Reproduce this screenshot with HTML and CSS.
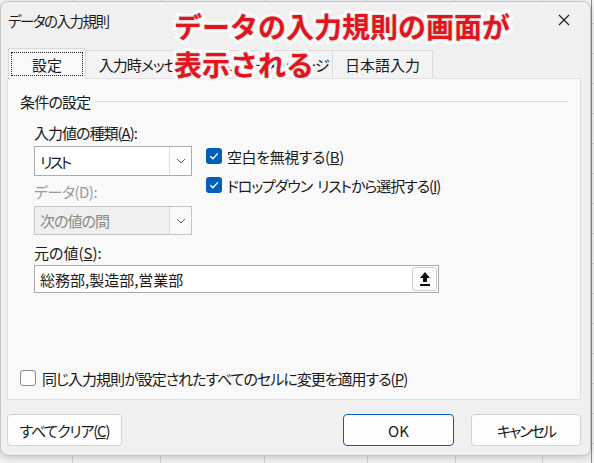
FILE: index.html
```html
<!DOCTYPE html>
<html lang="ja">

<head>
    <meta charset="UTF-8">
    <title>データの入力規則</title>
    <link rel="stylesheet" href="styles.css">
</head>

<body>
    <div class="dialog">
        <div class="titlebar">
            <span class="title">データの入力規則</span>
            <span class="close">
                <svg width="12" height="12" viewBox="0 0 12 12"><path d="M1 1 L11 11 M11 1 L1 11" stroke="#1a1a1a" stroke-width="1.1" fill="none"/></svg>
            </span>
        </div>

        <div class="tabs">
            <div class="tab tab-active"><span class="focus">設定</span></div>
            <div class="tab tab-msg">入力時メッセージ</div>
            <div class="tab tab-err"><span class="gap">エラー</span>メッセージ</div>
            <div class="tab tab-ime">日本語入力</div>
        </div>

        <div class="page">
            <div class="group-head">
                <span class="group-title">条件の設定</span>
                <i class="rule"></i>
            </div>

            <div class="group-body">
                <div class="criteria">
                    <div class="fields">
                        <div class="field-label type-label">入力値の種類(<u>A</u>):</div>
                        <div class="combo">
                            <span class="combo-value list-value">リスト</span>
                            <span class="combo-btn">
                                <svg width="10" height="6" viewBox="0 0 10 6"><path d="M1 1 L5 5 L9 1" stroke="#606060" stroke-width="1" fill="none"/></svg>
                            </span>
                        </div>
                        <div class="field-label disabled">データ(D):</div>
                        <div class="combo combo-disabled">
                            <span class="combo-value">次の値の間</span>
                            <span class="combo-btn">
                                <svg width="10" height="6" viewBox="0 0 10 6"><path d="M1 1 L5 5 L9 1" stroke="#606060" stroke-width="1" fill="none"/></svg>
                            </span>
                        </div>
                    </div>

                    <div class="options">
                        <div class="check check-blank">
                            <span class="box box-on">
                                <svg width="16" height="16" viewBox="0 0 16 16"><path d="M4.2 8.3 L6.9 10.8 L11.8 5.4" stroke="#fff" stroke-width="1.4" fill="none"/></svg>
                            </span>
                            空白を無視する(<u>B</u>)
                        </div>
                        <div class="check check-dropdown">
                            <span class="box box-on">
                                <svg width="16" height="16" viewBox="0 0 16 16"><path d="M4.2 8.3 L6.9 10.8 L11.8 5.4" stroke="#fff" stroke-width="1.4" fill="none"/></svg>
                            </span>
                            <span class="gap">ドロップダウン</span>リストから選択する(<u>I</u>)
                        </div>
                    </div>
                </div>

                <div class="field-label source-label">元の値(<u>S</u>):</div>
                <div class="source">
                    <span class="source-value">総務部,製造部,営業部</span>
                    <span class="pick-btn">
                        <svg width="12" height="16" viewBox="0 0 12 16"><path d="M6 1 L11 7 H8 V11 H4 V7 H1 Z" fill="#111"/><rect x="1" y="13" width="10" height="2" fill="#111"/></svg>
                    </span>
                </div>
            </div>

            <div class="check check-apply">
                <span class="box"></span>
                同じ入力規則が設定されたすべてのセルに変更を適用する(<u>P</u>)
            </div>
        </div>

        <div class="actions">
            <button class="btn btn-clear">すべてクリア(<u>C</u>)</button>
            <button class="btn btn-ok">OK</button>
            <button class="btn btn-cancel">キャンセル</button>
        </div>

        <div class="callout">データの入力規則の画面が<br>表示される</div>
    </div>
</body>

</html>
```

FILE: styles.css
```css
html,
body {
    margin: 0;
    padding: 0;
}

body {
    height: 463px;
    overflow: hidden;
    font-family: "Noto Sans CJK JP", "Noto Sans", sans-serif;
    font-size: 15px;
    color: #1a1a1a;
    font-feature-settings: "palt";
    background-color: #f4f4f4;
    background-image:
        linear-gradient(90deg, transparent 591px, #8c8c8c 591px 592px, transparent 592px),
        linear-gradient(90deg, transparent 72px, #d4d4d4 72px 73px, transparent 73px 160px, #d4d4d4 160px 161px, transparent 161px 264px, #d4d4d4 264px 265px, transparent 265px 367px, #d4d4d4 367px 368px, transparent 368px 455px, #d4d4d4 455px 456px, transparent 456px 542px, #d4d4d4 542px 543px, transparent 543px),
        repeating-linear-gradient(180deg, transparent 0 29px, #d4d4d4 29px 30px);
    background-position: 0 0, 0 0, 0 -6px;
}


.dialog {
    position: relative;
    width: 591px;
    height: 455px;
    margin-top: 1px;
    box-sizing: border-box;
    display: flex;
    flex-direction: column;
    background: #f0f0f0;
    border: 1px solid #c6c6c6;
    border-radius: 8px;
    box-shadow: 0 2px 9px rgba(0, 0, 0, 0.2);
}


.titlebar {
    height: 36px;
    display: flex;
    align-items: center;
    padding-left: 7px;
}

.title {
    font-size: 14.5px;
    letter-spacing: -1.5px;
}

.close {
    margin-left: auto;
    width: 52px;
    display: flex;
    justify-content: center;
}

/* word break inside a label, where a space would collapse */
.gap {
    margin-right: 5px;
}


.tabs {
    display: flex;
    align-items: flex-end;
    height: 30px;
    margin: 10px 0 0 7px;
    position: relative;
    z-index: 1;
}

.tab {
    height: 28px;
    box-sizing: border-box;
    display: flex;
    align-items: center;
    justify-content: center;
    border: 1px solid #dadada;
    border-bottom: none;
    background: #f3f3f3;
    margin-left: -1px;
    white-space: nowrap;
    letter-spacing: -1px;
}

.tab-active {
    width: 78px;
    height: 31px;
    margin-left: 0;
    margin-bottom: -1px;
    padding: 3px 2px 3px 2px;
    background: #f9f9f9;
    align-items: stretch;
    letter-spacing: 0;
}

.focus {
    flex: 1;
    display: flex;
    align-items: center;
    justify-content: center;
    border: 1px dotted #222;
}

.tab-msg {
    width: 133px;
}

.tab-err {
    width: 116px;
}

.tab-ime {
    width: 101px;
    letter-spacing: 0;
}


.page {
    height: 322px;
    flex: 0 0 322px;
    box-sizing: border-box;
    margin: 0 9px 0 6px;
    padding: 0 12px 11px 12px;
    display: flex;
    flex-direction: column;
    background: #f9f9f9;
    border: 1px solid #e0e0e0;
}

.group-head {
    display: flex;
    align-items: center;
    height: 20px;
    margin-top: 12px;
}

.group-title {
    letter-spacing: -0.8px;
}

.rule {
    flex: 1;
    height: 1px;
    margin-left: 5px;
    background: #dadada;
}

.group-body {
    padding-left: 14px;
}

.criteria {
    display: flex;
    margin-top: 12px;
}

.fields {
    width: 158px;
}

.field-label {
    height: 20px;
    line-height: 20px;
    white-space: nowrap;
}

.type-label {
    letter-spacing: -1px;
}

.field-label.disabled {
    margin-top: 6px;
    color: #9a9a9a;
    letter-spacing: -0.5px;
}

.combo {
    display: flex;
    height: 30px;
    margin-top: 3px;
    box-sizing: border-box;
    border: 1px solid #ababab;
    background: #fff;
}

.combo-disabled {
    height: 29px;
    margin-top: 4px;
    background: #efefef;
    border-color: #c4c4c4;
    color: #8a8a8a;
    letter-spacing: -1px;
}

.combo-value {
    flex: 1;
    display: flex;
    align-items: center;
    padding-left: 5px;
}

.list-value {
    letter-spacing: -2.5px;
}

.combo-btn {
    width: 21px;
    display: flex;
    align-items: center;
    justify-content: center;
    border-left: 1px solid #dcdcdc;
    background: #fff;
}

.combo-disabled .combo-btn {
    background: #f9f9f9;
}


.options {
    margin-left: 14px;
    padding-top: 24px;
}

.check {
    display: flex;
    align-items: center;
    height: 18px;
    white-space: nowrap;
}

.options .check + .check {
    margin-top: 11px;
}

.check-blank {
    letter-spacing: -0.4px;
}

.check-dropdown {
    letter-spacing: -1.1px;
}

.box {
    width: 16px;
    height: 16px;
    flex: none;
    box-sizing: border-box;
    margin-right: 5px;
    border: 1px solid #8a8a8a;
    border-radius: 3px;
    background: #fdfdfd;
    display: flex;
}

.box-on {
    border: none;
    background: #005fb8;
}


.source-label {
    margin-top: 8px;
}

.source {
    display: flex;
    align-items: center;
    width: 405px;
    height: 28px;
    margin-top: 2px;
    box-sizing: border-box;
    border: 1px solid #ababab;
    background: #fff;
}

.source-value {
    flex: 1;
    padding-left: 5px;
}

.pick-btn {
    width: 25px;
    height: 24px;
    margin-right: 1px;
    box-sizing: border-box;
    display: flex;
    align-items: center;
    justify-content: center;
    border: 1px solid #cdcdcd;
    border-radius: 3px;
    background: #fdfdfd;
}


.check-apply {
    margin-top: auto;
    height: 20px;
    letter-spacing: -1px;
}

.check-apply .box {
    margin-right: 6px;
}


.actions {
    display: flex;
    height: 32px;
    margin: 14px 9px 0 6px;
}

.btn {
    height: 32px;
    box-sizing: border-box;
    padding: 0;
    font-family: inherit;
    font-size: 15px;
    font-feature-settings: "palt";
    color: #1a1a1a;
    background: #fdfdfd;
    border: 1px solid #d2d2d2;
    border-radius: 4px;
}

.btn-clear {
    width: 115px;
    letter-spacing: -1.2px;
}

.btn-ok {
    width: 111px;
    margin-left: auto;
    border-color: #005fb8;
}

.btn-cancel {
    width: 110px;
    margin-left: 17px;
    letter-spacing: -2px;
}


/* red annotation laid over the dialog */
.callout {
    position: absolute;
    left: 173px;
    top: 5px;
    z-index: 2;
    font-size: 28px;
    font-weight: bold;
    line-height: 38px;
    font-feature-settings: normal;
    white-space: nowrap;
    color: #e5141c;
    -webkit-text-stroke: 6px #fff;
    paint-order: stroke fill;
    text-shadow: 0 0 3px rgba(0, 0, 0, 0.3);
}
```
